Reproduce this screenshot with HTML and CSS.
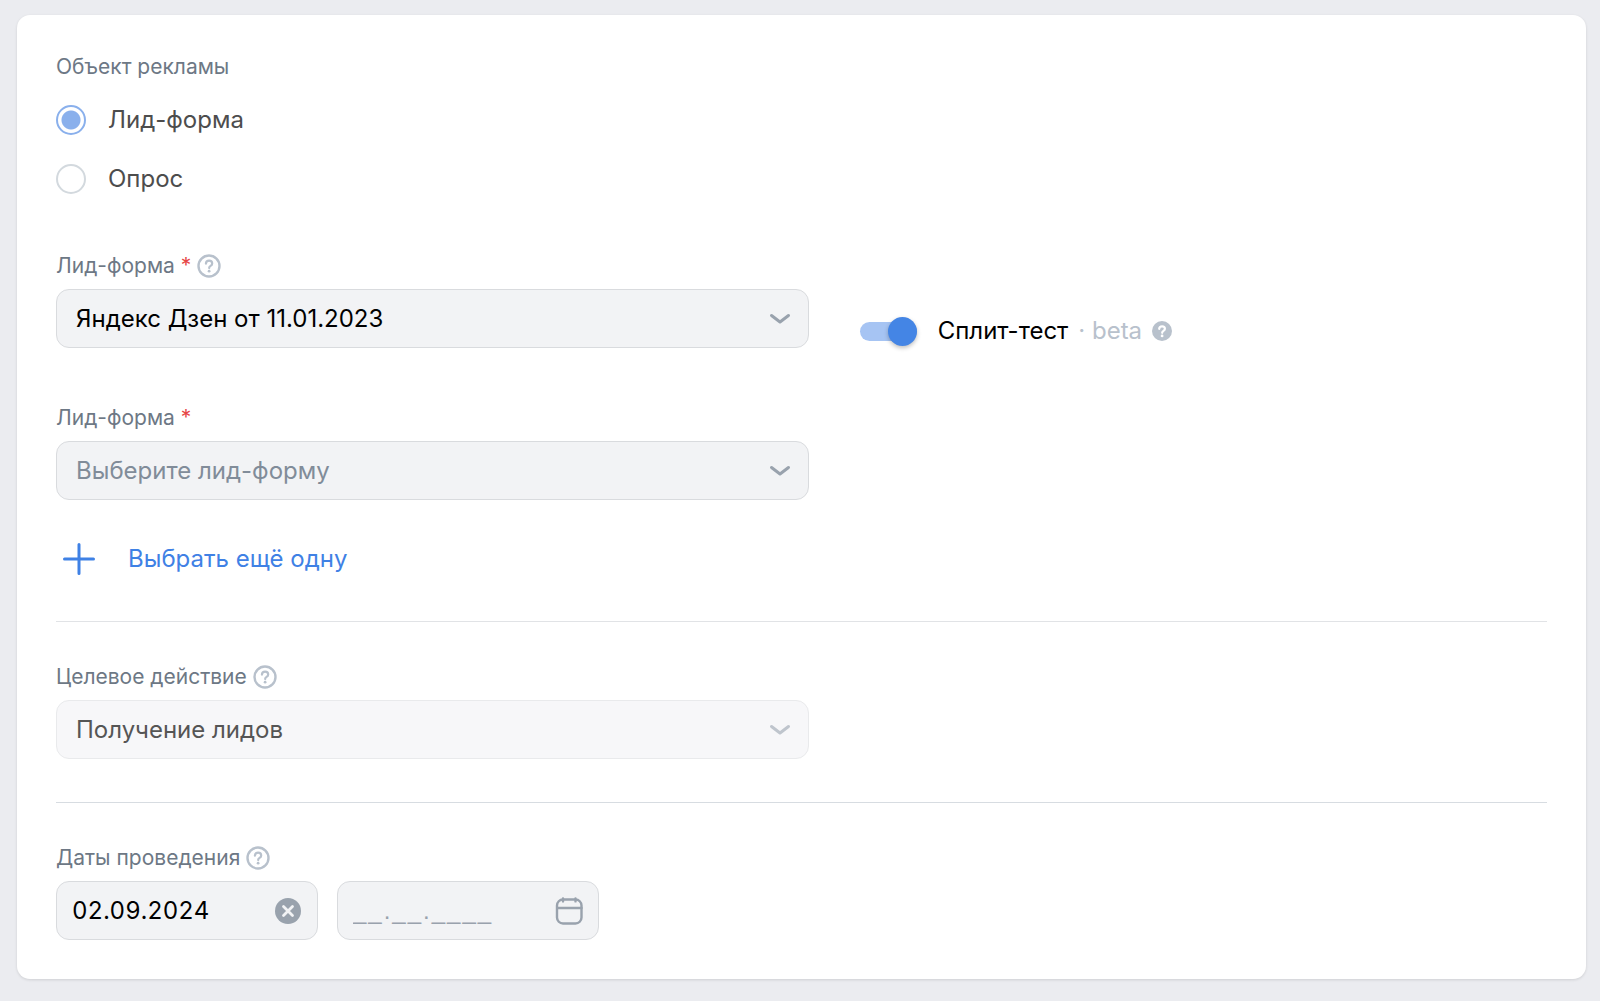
FILE: index.html
```html
<!DOCTYPE html>
<html lang="ru">
<head>
<meta charset="utf-8">
<meta name="viewport" content="width=device-width, initial-scale=1">
<title>Объект рекламы</title>
<link rel="stylesheet" href="styles.css">
</head>
<body>
<svg class="sprite" aria-hidden="true">
  <symbol id="help" viewBox="0 0 24 24">
    <circle cx="12" cy="12" r="10.500" fill="none" stroke="currentColor" stroke-width="2.400"/>
    <path d="M8.900 9.600c.1-1.800 1.400-2.900 3.200-2.900s3.100 1.100 3.100 2.700c0 1.200-.6 1.900-1.600 2.500-1 .6-1.400 1-1.400 1.900v.3" fill="none" stroke="currentColor" stroke-width="2.200" stroke-linecap="round"/>
    <circle cx="12.100" cy="17.200" r="1.400" fill="currentColor"/>
  </symbol>
  <symbol id="chevron" viewBox="0 0 24 24">
    <path d="M3.500 8.500 12 15l8.500-6.500" fill="none" stroke="currentColor" stroke-width="3" stroke-linecap="round" stroke-linejoin="round"/>
  </symbol>
</svg>
<form class="card">
  <fieldset class="group">
    <legend class="label">Объект рекламы</legend>
    <label class="choice"><input class="radio" type="radio" name="object" checked><span>Лид-форма</span></label>
    <label class="choice"><input class="radio" type="radio" name="object"><span>Опрос</span></label>
  </fieldset>

  <div class="row row-lead">
    <div class="field">
      <div class="label"><label for="lead-a">Лид-форма <span class="required">*</span></label><svg class="help"><use href="#help"/></svg></div>
      <div class="select-box">
        <select class="control select" id="lead-a"><option>Яндекс Дзен от 11.01.2023</option></select>
        <svg class="chevron"><use href="#chevron"/></svg>
      </div>
    </div>
    <div class="split">
      <input class="switch" type="checkbox" id="split" checked>
      <label for="split">Сплит-тест</label>
      <span class="beta">· beta</span>
      <svg class="help-solid" viewBox="0 0 20 20">
        <circle cx="10" cy="10" r="10" fill="currentColor"/>
        <path d="M7.200 7.900c.1-1.600 1.200-2.500 2.900-2.500s2.800 1 2.800 2.400c0 1-.5 1.600-1.400 2.100-.9.6-1.300.9-1.300 1.700v.2" fill="none" stroke="#fff" stroke-width="2.200" stroke-linecap="round"/>
        <circle cx="10.100" cy="14.900" r="1.400" fill="#fff"/>
      </svg>
    </div>
  </div>

  <div class="row row-second">
    <div class="field">
      <div class="label"><label for="lead-b">Лид-форма <span class="required">*</span></label></div>
      <div class="select-box">
        <select class="control select empty" id="lead-b"><option>Выберите лид-форму</option></select>
        <svg class="chevron"><use href="#chevron"/></svg>
      </div>
    </div>
  </div>

  <button class="add" type="button">
    <svg class="plus" viewBox="0 0 32 32"><path d="M16 1.500v29M1.500 16h29" fill="none" stroke="currentColor" stroke-width="3" stroke-linecap="round"/></svg>
    <span>Выбрать ещё одну</span>
  </button>

  <section class="section">
    <div class="row">
      <div class="field">
        <div class="label"><label for="goal">Целевое действие</label><svg class="help"><use href="#help"/></svg></div>
        <div class="select-box">
          <select class="control select" id="goal" disabled><option>Получение лидов</option></select>
          <svg class="chevron"><use href="#chevron"/></svg>
        </div>
      </div>
    </div>
  </section>

  <section class="section section-dates">
    <div class="field">
      <div class="label"><label for="start">Даты проведения</label><svg class="help"><use href="#help"/></svg></div>
      <div class="dates">
        <div class="control date">
          <input class="date-input" type="text" id="start" value="02.09.2024">
          <button class="icon-button" type="button" aria-label="Очистить">
            <svg class="icon" viewBox="0 0 28 28"><circle cx="14" cy="14" r="13" fill="currentColor"/><path d="m9.500 9.500 9 9m0-9-9 9" stroke="#f2f3f5" stroke-width="2.800" stroke-linecap="round"/></svg>
          </button>
        </div>
        <div class="control date">
          <input class="date-input" type="text" aria-label="Дата окончания" placeholder="__.__.____">
          <button class="icon-button" type="button" aria-label="Открыть календарь">
            <svg class="icon" viewBox="0 0 28 28" fill="none" stroke="currentColor" stroke-width="2.400" stroke-linecap="round"><rect x="2" y="2.500" width="24.500" height="24" rx="6"/><path d="M2.500 11h24M8 1.400v3M20.500 1.400v3"/></svg>
          </button>
        </div>
      </div>
    </div>
  </section>
</form>
</body>
</html>
```
FILE: styles.css
```css
* {
  box-sizing: border-box;
}

body {
  margin: 0;
  padding: 15px 14px 22px 17px;
  background: #ebecf0;
  color: #000;
  font-family: Inter, "Noto Sans", sans-serif;
  font-size: 24px;
  line-height: 32px;
}

.sprite {
  display: none;
}

.card {
  padding: 38px 39px 39px;
  border-radius: 13px;
  background: #fff;
  box-shadow: 0 1px 3px rgba(0, 0, 0, 0.12);
}

.group {
  margin: 0;
  padding: 0;
  border: 0;
}

.label {
  display: flex;
  align-items: center;
  gap: 6px;
  padding: 0;
  color: #6d7885;
  font-size: 21px;
  line-height: 28px;
}

.group .label {
  margin-bottom: 9px;
}

.required {
  color: #e64646;
}

.help {
  width: 24px;
  height: 24px;
  color: #b8c1cc;
}

.choice {
  display: flex;
  align-items: center;
  gap: 22px;
  height: 59px;
  color: #4d4d4d;
}

.radio {
  appearance: none;
  width: 30px;
  height: 30px;
  margin: 0;
  border: 2px solid #d3d9de;
  border-radius: 50%;
}

.radio:checked {
  border-color: #8ab0ec;
  background: radial-gradient(circle, #8ab0ec 9px, #fff 10px);
}

.row {
  display: grid;
  grid-template-columns: 23fr 21fr;
  column-gap: 51px;
}

.row-lead {
  margin-top: 44px;
}

.row-second {
  margin-top: 56px;
}

.field {
  display: grid;
  gap: 9px;
}

.control {
  width: 100%;
  height: 59px;
  border: 1px solid #d9dbde;
  border-radius: 13px;
  background: #f2f3f5;
  color: #000;
  font: inherit;
}

.select-box {
  position: relative;
}

.select {
  display: block;
  appearance: none;
  padding: 0 60px 0 19px;
}

.select.empty {
  color: #818c99;
}

.select:disabled {
  border-color: #e9eaec;
  background: #f7f7f9;
  color: #555;
  opacity: 1;
}

.chevron {
  position: absolute;
  top: 18px;
  right: 17px;
  width: 24px;
  height: 24px;
  color: #99a2ad;
  pointer-events: none;
}

.select:disabled + .chevron {
  color: #bfc5cd;
}

.split {
  display: flex;
  align-items: center;
  align-self: end;
  height: 34px;
}

.switch {
  display: flex;
  align-items: center;
  justify-content: flex-end;
  appearance: none;
  width: 57px;
  height: 19px;
  margin: 0 21px 0 0;
  background: #a6c4f3;
  border-radius: 10px;
}

.switch::before {
  content: "";
  width: 29px;
  height: 29px;
  border-radius: 50%;
  background: #4485e5;
  box-shadow: 0 2px 4px rgba(0, 0, 0, 0.25);
}

.beta {
  margin: 0 10px;
  color: #b8c1cc;
}

.help-solid {
  width: 20px;
  height: 20px;
  color: #b8c1cc;
}

.add {
  display: flex;
  align-items: center;
  gap: 33px;
  height: 58px;
  margin: 30px 0 33px;
  padding: 0 7px;
  border: 0;
  background: none;
  color: #3f81e5;
  font: inherit;
}

.plus {
  width: 32px;
  height: 32px;
}

.section {
  padding-top: 41px;
  border-top: 1px solid #e1e3e6;
}

.section-dates {
  margin-top: 43px;
  border-color: #d7dce1;
}

.dates {
  display: flex;
  gap: 19px;
}

.date {
  display: flex;
  align-items: center;
  width: 262px;
  padding: 0 15px;
}

.date-input {
  flex: 1;
  min-width: 0;
  height: 40px;
  padding: 0;
  border: 0;
  background: none;
  color: inherit;
  font: inherit;
  font-variant-numeric: tabular-nums;
}

/* the mask keeps its blanks visibly apart */
.date-input::placeholder {
  color: #99a2ad;
  font-family: "Liberation Sans", sans-serif;
  letter-spacing: 2px;
}

.icon-button {
  padding: 0;
  border: 0;
  background: none;
  color: #99a2ad;
}

.icon {
  display: block;
  width: 28px;
  height: 28px;
}
```
